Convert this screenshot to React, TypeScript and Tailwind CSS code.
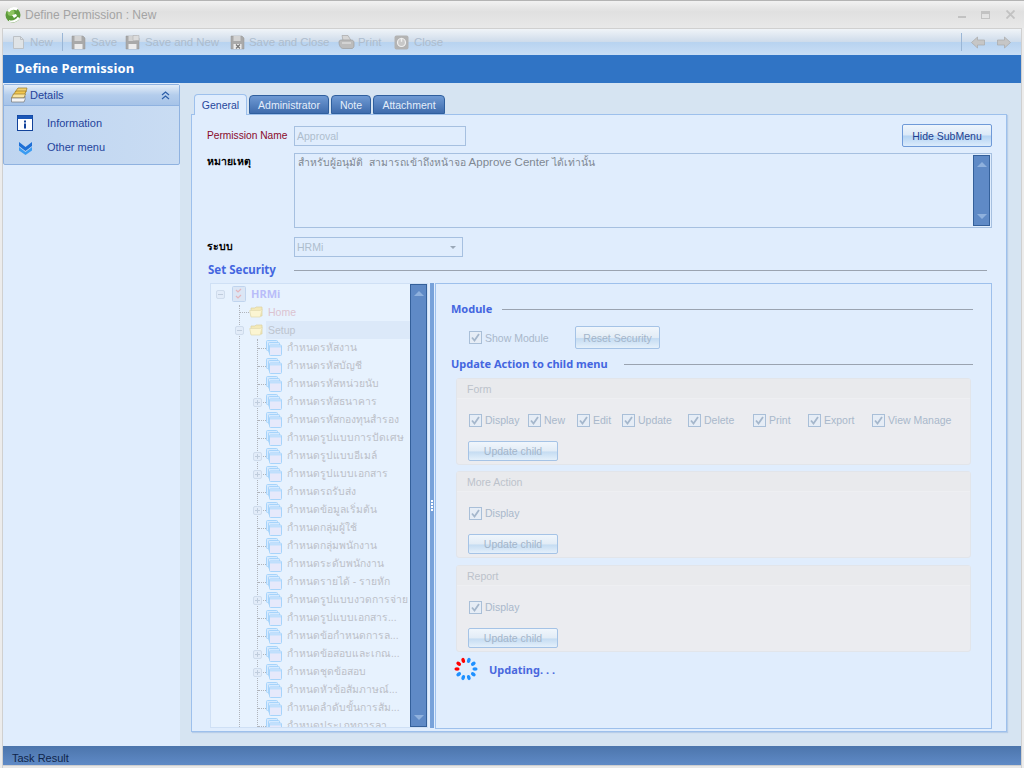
import React from "react";

const FolderOpen = () => (
  <svg width="15" height="14" viewBox="0 0 15 14" className="shrink-0">
    <path d="M2 3h4l1 -1h6v9H2z" fill="#f3e9b8" stroke="#ddd3a0" strokeWidth="0.7" />
    <path d="M0.7 5.5h10.5l2 -1.5-2 8H2z" fill="#fbf5d2" stroke="#e3dbb0" strokeWidth="0.7" />
  </svg>
);
const Pages = () => (
  <svg width="16" height="16" viewBox="0 0 16 16" className="shrink-0">
    <rect x="0.5" y="0.5" width="11" height="10" rx="1" fill="#d6eaff" stroke="#a7d4fb" />
    <rect x="2.5" y="2.5" width="11" height="10" rx="1" fill="#d6eaff" stroke="#a7d4fb" />
    <rect x="3.5" y="5" width="12" height="10.5" rx="1" fill="#e6e9fb" stroke="#a7d4fb" />
    <rect x="4" y="5.5" width="11" height="2" fill="#bfe0fd" />
  </svg>
);
const Box = ({ minus }: { minus?: boolean }) => (
  <div className="w-[9px] h-[9px] border border-[#cfdcec] rounded-[2px] bg-[#e2ecf9] flex items-center justify-center relative shrink-0">
    <div className="w-[5px] h-px bg-[#c0cddd]" />
    {!minus && <div className="absolute w-px h-[5px] bg-[#c0cddd]" />}
  </div>
);

const items: [string, boolean][] = [
  ["กำหนดรหัสงาน", false],
  ["กำหนดรหัสบัญชี", false],
  ["กำหนดรหัสหน่วยนับ", false],
  ["กำหนดรหัสธนาคาร", true],
  ["กำหนดรหัสกองทุนสำรอง", false],
  ["กำหนดรูปแบบการปัดเศษ", false],
  ["กำหนดรูปแบบอีเมล์", true],
  ["กำหนดรูปแบบเอกสาร", true],
  ["กำหนดรถรับส่ง", false],
  ["กำหนดข้อมูลเริ่มต้น", true],
  ["กำหนดกลุ่มผู้ใช้", false],
  ["กำหนดกลุ่มพนักงาน", false],
  ["กำหนดระดับพนักงาน", false],
  ["กำหนดรายได้ - รายหัก", false],
  ["กำหนดรูปแบบงวดการจ่าย", true],
  ["กำหนดรูปแบบเอกสาร...", false],
  ["กำหนดข้อกำหนดการล...", false],
  ["กำหนดข้อสอบและเกณ...", true],
  ["กำหนดชุดข้อสอบ", true],
  ["กำหนดหัวข้อสัมภาษณ์...", false],
  ["กำหนดลำดับขั้นการสัม...", false],
  ["กำหนดประเภทการลา", false],
];

const Check = ({ label, w }: { label: string; w: string }) => (
  <div className={`flex items-center ${w} shrink-0`}>
    <div className="w-[13px] h-[13px] border border-[#a9bfd8] bg-[#e6edf6] flex items-center justify-center shrink-0">
      <svg width="9" height="9" viewBox="0 0 9 9">
        <path d="M1 4.5l2.5 3L8 1" fill="none" stroke="#a5b7cc" strokeWidth="1.8" />
      </svg>
    </div>
    <span className="ml-[3px] text-[#a9b8cb] whitespace-nowrap">{label}</span>
  </div>
);

const Btn = ({ label, w, h = "h-[20px]" }: { label: string; w: string; h?: string }) => (
  <div className={`${w} ${h} rounded-[2px] border border-[#a5c3e6] bg-[linear-gradient(#f0f6fc_0%,#e2ecf6_50%,#c5dcf2_55%,#e4f0fb_100%)] text-[#a3b5ca] flex items-center justify-center whitespace-nowrap shrink-0`}>
    {label}
  </div>
);

const Group = ({ title, children, cls }: { title: string; children: React.ReactNode; cls?: string }) => (
  <div className={`h-[87px] border border-[#e2e5ea] rounded-[3px] bg-[#ebecf0] mx-[20px] shrink-0 flex flex-col ${cls ?? ""}`}>
    <div className="h-[20px] bg-[#e9eaed] border-b border-[#eeeff2] pl-[10px] text-[#bcc2cb] flex items-center shrink-0">{title}</div>
    {children}
  </div>
);

const Heading = ({ label, lineCls, size }: { label: string; lineCls: string; size?: string }) => (
  <div className="flex items-center">
    <span className={`font-['Noto_Sans'] font-bold ${size ?? "text-[11px]"} text-[#4466e0] whitespace-nowrap`}>{label}</span>
    <div className={`h-px bg-[#9aa3b0] ${lineCls}`} />
  </div>
);

const ToolIcon = ({ kind }: { kind: string }) => {
  if (kind === "new")
    return (
      <svg width="15" height="15" viewBox="0 0 15 15" className="shrink-0">
        <path d="M2.5 1.5h7l3 3v9h-10z" fill="#dfe3e6" stroke="#bcc1c6" />
        <path d="M9.5 1.5v3h3" fill="none" stroke="#bcc1c6" />
      </svg>
    );
  if (kind === "print")
    return (
      <svg width="17" height="16" viewBox="0 0 17 16" className="shrink-0">
        <path d="M4 1.5h6l3 5H5z" fill="#d6d6d6" stroke="#a8a8a8" strokeWidth="0.7" />
        <path d="M1 8c0-2 2-2 3-2h9c2 0 3 1 3 3v3c0 1-1 2.500-2 2.500H5C3 14.500 1 12 1 8z" fill="#bcbcbc" stroke="#9c9c9c" strokeWidth="0.7" />
        <path d="M4 9h9" stroke="#e2e2e2" strokeWidth="1.200" />
      </svg>
    );
  if (kind === "close")
    return (
      <svg width="15" height="15" viewBox="0 0 15 15" className="shrink-0">
        <rect x="0.5" y="0.5" width="14" height="14" rx="2" fill="#b3b3b3" />
        <circle cx="7.5" cy="7.5" r="4" fill="#c8c8c8" stroke="#efefef" strokeWidth="1.2" />
        <rect x="6.8" y="2.8" width="1.4" height="4" fill="#efefef" />
      </svg>
    );
  return (
    <svg width="15" height="15" viewBox="0 0 15 15" className="shrink-0">
      <path d="M1 1h11l2 2v11H1z" fill="#a9a9a9" stroke="#959595" strokeWidth="0.5" />
      <rect x="3.5" y="1" width="7" height="5" fill="#d3d3d3" />
      <rect x="3.5" y="9" width="8" height="5" fill="#ececec" />
      {kind === "new2" && <path d="M8 0.5h6v5H8z" fill="#dcdcdc" stroke="#aaa" strokeWidth="0.5" />}
      {kind === "close2" && <path d="M6 9.5l4 4m0-4l-4 4" stroke="#777" strokeWidth="1.3" />}
    </svg>
  );
};

const Tool = ({ kind, label, gap, after }: { kind: string; label: string; gap: string; after: string }) => (
  <div className={`flex items-center ${after} shrink-0`}>
    <ToolIcon kind={kind} />
    <span className={`${gap} text-[11.4px] text-[#adbccd] whitespace-nowrap`}>{label}</span>
  </div>
);

const Scroll = ({ cls }: { cls: string }) => (
  <div className={`${cls} bg-[#5f8ac6] border border-[#34609a] flex flex-col justify-between items-center py-[6px] shrink-0`}>
    <div className="w-0 h-0 border-x-[5px] border-x-transparent border-b-[5px] border-b-[#8fb1dd]" />
    <div className="w-0 h-0 border-x-[5px] border-x-transparent border-t-[5px] border-t-[#8fb1dd]" />
  </div>
);

const Tab = ({ label, w, active }: { label: string; w: string; active?: boolean }) =>
  active ? (
    <div className={`${w} h-[21px] -mb-px z-10 border border-b-0 border-[#9dc0ec] rounded-t-[4px] bg-[#e0edfd] text-[#26479b] flex items-center justify-center`}>{label}</div>
  ) : (
    <div className={`${w} h-[19px] border border-[#2f5f9e] rounded-t-[4px] bg-[linear-gradient(#6f9ad4,#3f6cad)] text-[#e4eefb] flex items-center justify-center`}>{label}</div>
  );

const dots: [number, string][] = [
  [252, "#ff0000"], [216, "#ff0000"], [180, "#ff0000"],
  [288, "#1e90ff"], [324, "#1e90ff"], [0, "#1e90ff"], [36, "#1e90ff"], [72, "#1e90ff"], [108, "#1e90ff"], [144, "#1e90ff"],
];

const thai = "text-[10.3px]";

export default function App() {
  return (
    <div className="w-[1024px] h-[768px] overflow-hidden flex flex-col font-['Liberation_Sans','DejaVu_Sans',sans-serif] text-[10.5px] leading-[14px] bg-[#ececec] border-t border-[#b4b4b4]">
      {/* Title bar */}
      <div className="h-[27px] shrink-0 flex items-center pl-[5px] pr-[9px] bg-[linear-gradient(#f2f2f2,#e0e0e0_40%,#e8e8e8)]">
        <svg width="16" height="17" viewBox="0 0 16 17" className="shrink-0">
          <circle cx="8" cy="9" r="7.500" fill="#5b9a3a" />
          <circle cx="6" cy="6.500" r="3.500" fill="#8cc460" />
          <path d="M2 5C4 1 9 0 13 2l-1.500 2.500C9 3 6 3.500 4.500 6z" fill="#ffffff" />
          <path d="M4 14c3 1.500 7 0 8.500-3L15 12c-2 4-7 5-11 3.500z" fill="#ffffff" />
          <path d="M7 9l4-1 1 2-3 2z" fill="#ffffff" />
        </svg>
        <span className="ml-[4px] text-[12px] text-[#a4a4a4] whitespace-nowrap">Define Permission : New</span>
        <div className="ml-auto flex items-center">
          <div className="w-[8px] h-[2px] bg-[#c2c2c2] mt-[4px]" />
          <div className="ml-[15px] w-[9px] h-[8px] border border-[#c2c2c2] border-t-[3px]" />
          <svg width="9" height="9" viewBox="0 0 9 9" className="ml-[16px]">
            <path d="M0.5 0.5l8 8m0-8l-8 8" stroke="#c2c2c2" strokeWidth="1.8" />
          </svg>
        </div>
      </div>

      <div className="flex-1 min-h-0 ml-[2px] mr-[2px] border-t border-l border-r border-[#d0d0d0] flex flex-col relative">
        {/* Toolbar */}
        <div className="h-[26px] shrink-0 flex items-center pl-[8px] pr-[10px] bg-[linear-gradient(#f0f4f8,#cfdceb_48%,#b8d3f0_52%,#c9def5)]">
          <Tool kind="new" label="New" gap="ml-[4px]" after="w-[51px]" />
          <div className="w-px h-[18px] bg-[#9ab6d6] mr-[8px]" />
          <Tool kind="save" label="Save" gap="ml-[5px]" after="w-[54px]" />
          <Tool kind="new2" label="Save and New" gap="ml-[5px]" after="w-[105px]" />
          <Tool kind="close2" label="Save and Close" gap="ml-[4px]" after="w-[108px]" />
          <Tool kind="print" label="Print" gap="ml-[3px]" after="w-[56px]" />
          <Tool kind="close" label="Close" gap="ml-[5px]" after="w-[50px]" />
          <div className="ml-auto w-px h-[18px] bg-[#9ab6d6]" />
          <svg width="14" height="13" viewBox="0 0 14 13" className="ml-[9px]">
            <path d="M0.5 6.5L6.5 1v3h7v5h-7v3z" fill="#c6c6c6" stroke="#a9a9a9" strokeWidth="0.7" />
          </svg>
          <svg width="14" height="13" viewBox="0 0 14 13" className="ml-[12px]">
            <path d="M13.5 6.5L7.5 1v3h-7v5h7v3z" fill="#c6c6c6" stroke="#a9a9a9" strokeWidth="0.7" />
          </svg>
        </div>
        {/* Header */}
        <div className="h-[28px] shrink-0 bg-[#3074c5] text-white font-['Noto_Sans'] font-bold text-[13px] flex items-center pl-[12px] pb-[2px] tracking-[0.1px]">
          Define Permission
        </div>

        {/* Body */}
        <div className="flex-1 min-h-0 flex">
          {/* Sidebar */}
          <div className="w-[177px] shrink-0 bg-[#e0edfd] pt-[1px]">
            <div className="h-[81px] border border-[#8fb2e0] rounded-[2px] bg-[linear-gradient(90deg,#bfd5f0,#c9dcf3)] w-[177px]">
              <div className="h-[21px] bg-[linear-gradient(#e3edf8,#b4cdec_50%,#a6c3e8)] border-b border-[#8fb2e0] flex items-center pl-[7px] pr-[9px] text-[#24429a]">
                <svg width="17" height="16" viewBox="0 0 17 16" className="shrink-0">
                  <path d="M4 5l3-4h9l-1 4z" fill="#f0cf6e" stroke="#9a7a28" strokeWidth="0.7" />
                  <path d="M2 8l3-4h10l-1.500 4z" fill="#f3c850" stroke="#9a7a28" strokeWidth="0.7" />
                  <path d="M0.500 11l2-4h12l-1.500 4z" fill="#f8e4a0" stroke="#9a7a28" strokeWidth="0.7" />
                  <path d="M0.500 11h12.500l1-1.500v3L13 15H0.500z" fill="#f4f4f4" stroke="#777" strokeWidth="0.7" />
                </svg>
                <span className="ml-[2px] text-[11px]">Details</span>
                <svg width="9" height="9" viewBox="0 0 9 9" className="ml-auto">
                  <path d="M1 4l3.500-3 3.500 3M1 8l3.500-3 3.500 3" fill="none" stroke="#2d5ea8" strokeWidth="1.2" />
                </svg>
              </div>
              <div className="flex flex-col text-[#25449c] text-[11px]">
                <div className="h-[24px] mt-[5px] flex items-center pl-[13px]">
                  <svg width="16" height="16" viewBox="0 0 16 16" className="shrink-0">
                    <rect x="0.5" y="0.5" width="15" height="15" fill="#ffffff" stroke="#12429a" />
                    <rect x="0.5" y="0.5" width="15" height="3.500" fill="#1c58b8" />
                    <rect x="7" y="5.500" width="2" height="2" fill="#12429a" />
                    <rect x="7" y="8.500" width="2" height="5" fill="#12429a" />
                  </svg>
                  <span className="ml-[14px]">Information</span>
                </div>
                <div className="h-[24px] flex items-center pl-[14px]">
                  <svg width="15" height="15" viewBox="0 0 15 15" className="shrink-0">
                    <path d="M1 2l6.500 5L14 2v4L7.500 11 1 6z" fill="#1e6fd6" />
                    <path d="M1 7l6.500 5L14 7v3.500L7.500 15 1 10.500z" fill="#3a9cf2" />
                  </svg>
                  <span className="ml-[14px]">Other menu</span>
                </div>
              </div>
            </div>
          </div>

          {/* Right content */}
          <div className="flex-1 min-w-0 bg-[#d6e4f2] flex flex-col">
            <div className="flex pl-[14px] pt-[11px] gap-[2px] items-end h-[31px] shrink-0">
              <Tab label="General" w="w-[53px]" active />
              <Tab label="Administrator" w="w-[80px]" />
              <Tab label="Note" w="w-[40px]" />
              <Tab label="Attachment" w="w-[72px]" />
            </div>
            <div className="ml-[11px] w-[816px] h-[618px] shrink-0 border border-[#9dc0ec] bg-[#e0edfd] flex flex-col shadow-[1px_1px_1px_#b7cde8]">
              {/* Row 1 */}
              <div className="flex items-center mt-[9px] h-[23px] pl-[15px] pr-[14px] shrink-0">
                <span className="w-[87px] text-[10.2px] text-[#8a0a2a] whitespace-nowrap">Permission Name</span>
                <div className="w-[172px] h-[20px] border border-[#a6c0e0] text-[#aebdcd] pl-[2px] flex items-center">Approval</div>
                <div className="ml-auto w-[90px] h-[23px] rounded-[2px] border border-[#6f9ad8] bg-[linear-gradient(#eef5fc_0%,#dce9f7_48%,#b4d3f3_52%,#dbebfb_100%)] text-[#1e3f8f] flex items-center justify-center whitespace-nowrap">Hide SubMenu</div>
              </div>
              {/* Note */}
              <div className="flex mt-[6px] pl-[15px] pr-[14px] shrink-0">
                <span className={`w-[87px] font-bold text-black pt-[1px] text-[10.5px]`}>หมายเหตุ</span>
                <div className="flex-1 h-[75px] border border-[#a6c0e0] flex justify-between pr-px py-px">
                  <span className={`pl-[3px] text-[#7f8892] whitespace-pre ${thai}`}>สำหรับผู้อนุมัติ  สามารถเข้าถึงหน้าจอ <span className="text-[11.5px]">Approve Center</span> ได้เท่านั้น</span>
                  <Scroll cls="w-[17px] h-full" />
                </div>
              </div>
              {/* System */}
              <div className="flex items-center mt-[9px] pl-[15px] shrink-0">
                <span className="w-[87px] font-bold text-black text-[10.5px] pb-[2px]">ระบบ</span>
                <div className="w-[169px] h-[20px] border border-[#a6c0e0] text-[#aebdcd] pl-[2px] pr-[6px] flex items-center justify-between">
                  HRMi
                  <div className="w-0 h-0 border-x-[3px] border-x-transparent border-t-[3px] border-t-[#9aa8b8]" />
                </div>
              </div>
              {/* Set Security */}
              <div className="mt-[6px] pl-[16px] pr-[19px] shrink-0">
                <Heading label="Set Security" size="text-[11.5px]" lineCls="flex-1 ml-[18px]" />
              </div>
              {/* Split */}
              <div className="flex flex-1 min-h-0 mt-[6px] pl-[18px] pr-[14px] pb-px">
                {/* Tree */}
                <div className="w-[218px] h-[445px] shrink-0 border border-[#cfe0f5] bg-[#e7f2fe] flex overflow-hidden">
                  <div className="flex-1 min-w-0 overflow-hidden relative">
                    <div className="absolute left-[28px] top-[21px] bottom-0 border-l border-dotted border-[#b0b4bb]" />
                    <div className="absolute left-[46px] top-[55px] bottom-0 border-l border-dotted border-[#b0b4bb]" />
                    <div className="relative h-[18px] mt-px flex items-center pl-[5px]">
                      <Box minus />
                      <svg width="14" height="16" viewBox="0 0 14 16" className="ml-[7px] shrink-0">
                        <rect x="0.500" y="0.500" width="13" height="15" rx="1" fill="#dbe6f5" stroke="#c0d4ee" />
                        <path d="M4 4l2 2 3-3M4 10l2 2 3-3" fill="none" stroke="#e4b6bd" strokeWidth="1.2" />
                      </svg>
                      <span className="ml-[5px] font-['Noto_Sans'] font-bold text-[11px] text-[#b9bdf9]">HRMi</span>
                    </div>
                    <div className="relative h-[18px] flex items-center pl-[38px]">
                      <div className="absolute left-[29px] top-[9px] w-[9px] border-t border-dotted border-[#b0b4bb]" />
                      <FolderOpen />
                      <span className="ml-[4px] text-[#dcc3d0]">Home</span>
                    </div>
                    <div className="relative h-[18px] flex items-center pl-[38px]">
                      <div className="absolute left-[24px] top-[5px]"><Box minus /></div>
                      <FolderOpen />
                      <span className="ml-[2px] pl-[2px] h-[18px] flex-1 bg-[#dce9f9] text-[#bcc4ce] flex items-center">Setup</span>
                    </div>
                    {items.map(([t, plus]) => (
                      <div key={t} className="relative h-[18px] flex items-center pl-[55px]">
                        <div className="absolute left-[47px] top-[9px] w-[8px] border-t border-dotted border-[#b0b4bb]" />
                        {plus && <div className="absolute left-[42px] top-[5px]"><Box /></div>}
                        <div className="relative"><Pages /></div>
                        <span className={`ml-[5px] text-[#bcc0c8] whitespace-nowrap ${thai}`}>{t}</span>
                      </div>
                    ))}
                  </div>
                  <Scroll cls="w-[17px] h-full" />
                </div>
                {/* Splitter */}
                <div className="w-[4px] ml-[2px] mr-px h-[445px] shrink-0 bg-[#78a2da] flex flex-col items-center justify-center gap-px">
                  <div className="w-[2px] h-[2px] bg-white" />
                  <div className="w-[2px] h-[2px] bg-white" />
                  <div className="w-[2px] h-[2px] bg-white" />
                  <div className="w-[2px] h-[2px] bg-white" />
                </div>
                {/* Detail */}
                <div className="flex-1 min-w-0 h-[446px] border border-[#9dc0ec] flex flex-col relative">
                  <div className="mt-[18px] pl-[15px] pr-[18px] shrink-0">
                    <Heading label="Module" lineCls="flex-1 ml-[10px]" />
                  </div>
                  <div className="flex items-center h-[23px] mt-[10px] pl-[33px] shrink-0">
                    <Check label="Show Module" w="w-[106px]" />
                    <Btn label="Reset Security" w="w-[85px]" h="h-[23px]" />
                  </div>
                  <div className="mt-[8px] pl-[15px] pr-[18px] shrink-0">
                    <Heading label="Update Action to child menu" lineCls="flex-1 ml-[16px]" />
                  </div>
                  <div className="mt-[7px] flex flex-col gap-[6px] shrink-0">
                    <Group title="Form">
                      <div className="flex items-center mt-[14px] pl-[12px]">
                        <Check label="Display" w="w-[59px]" />
                        <Check label="New" w="w-[49px]" />
                        <Check label="Edit" w="w-[45px]" />
                        <Check label="Update" w="w-[66px]" />
                        <Check label="Delete" w="w-[65px]" />
                        <Check label="Print" w="w-[55px]" />
                        <Check label="Export" w="w-[64px]" />
                        <Check label="View Manage" w="w-[80px]" />
                      </div>
                      <div className="mt-[14px] pl-[11px]"><Btn label="Update child" w="w-[90px]" /></div>
                    </Group>
                    <Group title="More Action">
                      <div className="flex items-center mt-[14px] pl-[12px]"><Check label="Display" w="w-[59px]" /></div>
                      <div className="mt-[14px] pl-[11px]"><Btn label="Update child" w="w-[90px]" /></div>
                    </Group>
                    <Group title="Report" cls="mt-px">
                      <div className="flex items-center mt-[14px] pl-[12px]"><Check label="Display" w="w-[59px]" /></div>
                      <div className="mt-[14px] pl-[11px]"><Btn label="Update child" w="w-[90px]" /></div>
                    </Group>
                  </div>
                  <div className="flex items-center mt-[4px] pl-[17px] shrink-0">
                    <svg width="26" height="26" viewBox="-13 -13 26 26" className="shrink-0">
                      {dots.map(([a, c]) => (
                        <ellipse key={a} cx="9" cy="0" rx="2.600" ry="1.800" fill={c} transform={`rotate(${a})`} />
                      ))}
                    </svg>
                    <span className="ml-[10px] pt-px font-['Noto_Sans'] font-bold text-[11px] text-[#4a68de]">Updating. . .</span>
                  </div>
                </div>
              </div>
            </div>
            <div className="flex-1" />
          </div>
        </div>
        {/* Task result */}
        <div className="h-[19px] shrink-0 bg-[linear-gradient(#4c75ac,#5f8ac6)] text-[11px] text-[#10254a] pl-[9px] pt-[5px] flex items-center">
          Task Result
        </div>
        <div className="h-[3px] shrink-0 bg-[#e8e8e8] border-t border-[#cfcfcf]" />
      </div>
    </div>
  );
}
